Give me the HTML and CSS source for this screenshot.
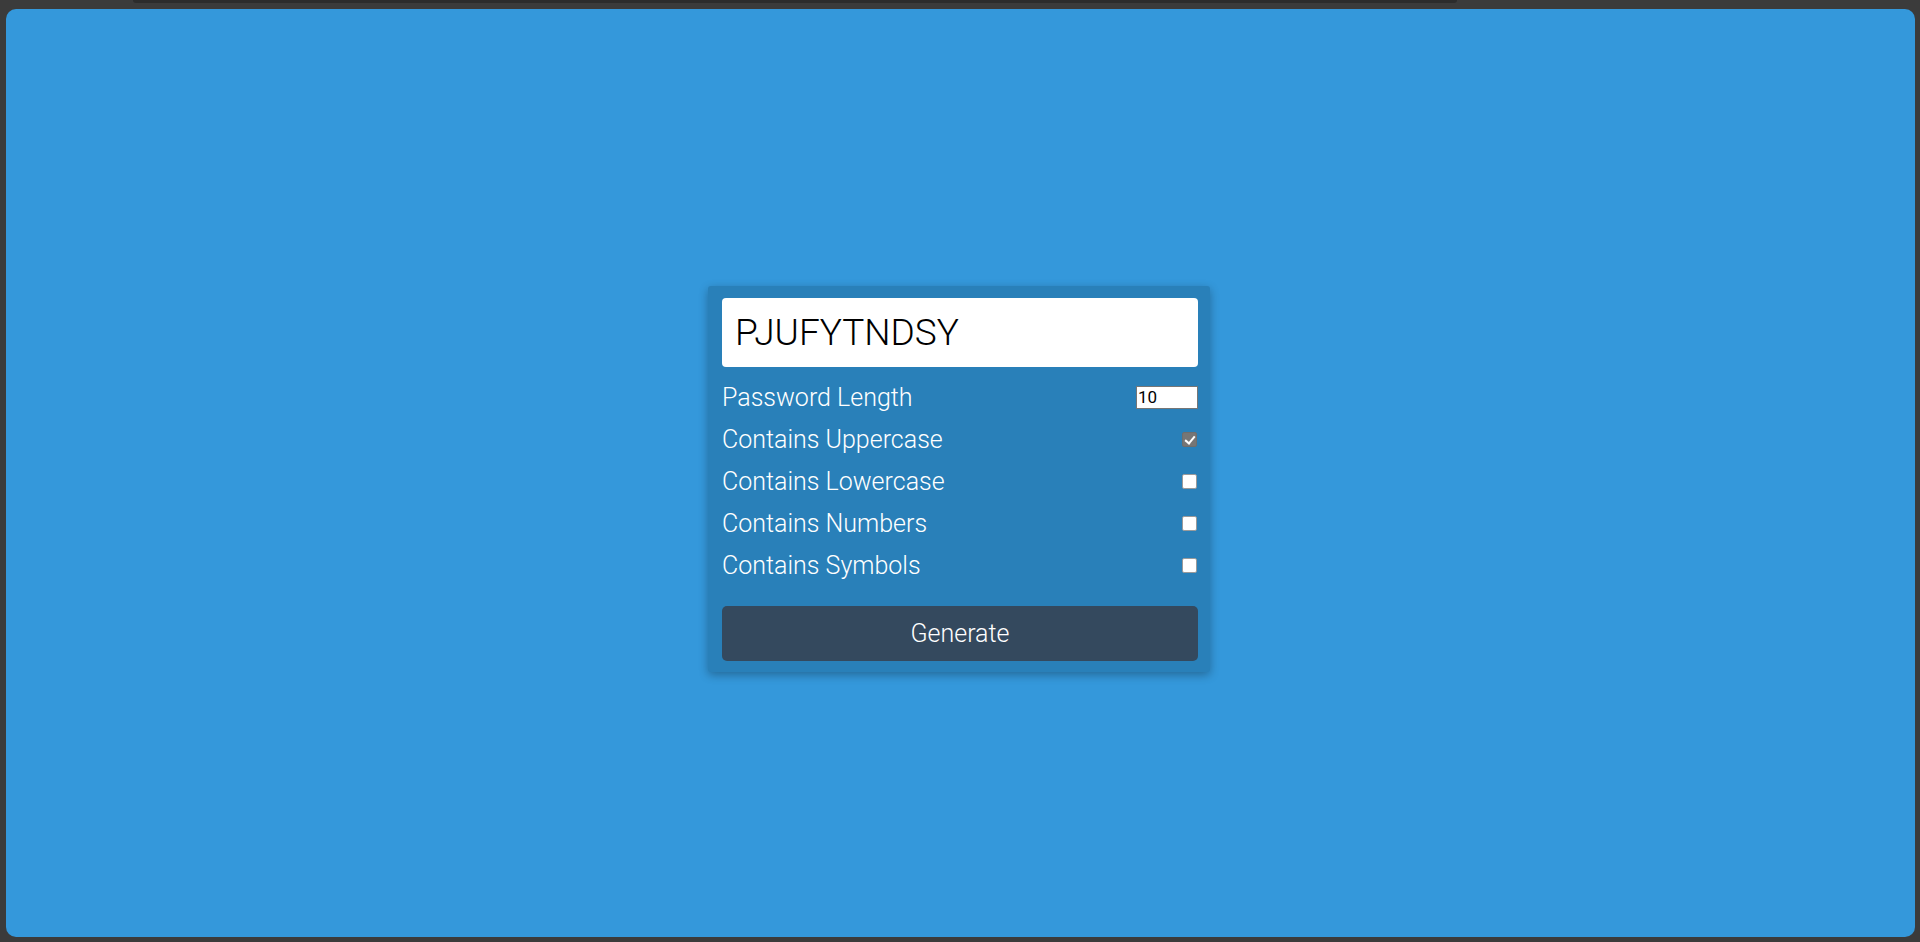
FILE: index.html
```html
<!DOCTYPE html>
<html lang="en">
<head>
<meta charset="utf-8">
<title>Password Generator</title>
<link rel="stylesheet" href="styles.css">
</head>
<body>
<div class="topbar"></div>
<main class="panel">
  <div class="card">
    <div class="result">PJUFYTNDSY</div>
    <div class="row">
      <label for="len">Password Length</label>
      <input id="len" class="num" type="number" value="10" min="4" max="20">
    </div>
    <div class="row">
      <label for="up">Contains Uppercase</label>
      <input id="up" class="chk" type="checkbox" checked disabled>
    </div>
    <div class="row">
      <label for="lo">Contains Lowercase</label>
      <input id="lo" class="chk" type="checkbox">
    </div>
    <div class="row">
      <label for="nu">Contains Numbers</label>
      <input id="nu" class="chk" type="checkbox">
    </div>
    <div class="row">
      <label for="sy">Contains Symbols</label>
      <input id="sy" class="chk" type="checkbox">
    </div>
    <button class="btn" type="button">Generate</button>
  </div>
</main>
</body>
</html>
```
FILE: styles.css
```css
* { box-sizing: border-box; }
html, body { height: 100%; }
body {
  margin: 0;
  background: #3b3b3b;
  font-family: Roboto, "Liberation Sans", sans-serif;
  padding: 9px 5px 5px 6px;
  position: relative;
}
.topbar {
  position: absolute;
  top: 0;
  left: 133px;
  width: 1324px;
  height: 3px;
  background: #2c2c2c;
  border-radius: 0 0 6px 6px;
}
.panel {
  height: 928px;
  background: #3498db;
  border-radius: 10px;
  display: flex;
  align-items: center;
  justify-content: center;
  padding-top: 12px;
  padding-right: 3px;
}
.card {
  width: 502px;
  background: #2980b9;
  border-radius: 3px;
  padding: 12px 12px 11px 14px;
  box-shadow: 0 3px 10px rgba(0, 0, 0, 0.3);
  display: flex;
  flex-direction: column;
}
.result {
  height: 69px;
  background: #fff;
  border-radius: 4px;
  color: #000;
  font-weight: 300;
  font-size: 37px;
  display: flex;
  align-items: center;
  padding: 0 14px 0 13px;
  margin-bottom: 9px;
}
.row {
  height: 42px;
  display: flex;
  align-items: center;
  justify-content: space-between;
  color: #fff;
  font-size: 25px;
  font-weight: 300;
}
.num {
  width: 62px;
  height: 23px;
  margin: 0;
  border: 1px solid #767676;
  padding: 0 1px;
  font-family: Roboto, "Liberation Sans", sans-serif;
  font-size: 17px;
  color: #000;
  background: #fff;
}
.chk {
  -webkit-appearance: none;
  appearance: none;
  width: 15px;
  height: 15px;
  margin: 0 1px 0 0;
  border: 1px solid #9a9a9a;
  border-radius: 2px;
  background: #fff;
  position: relative;
}
.chk:checked {
  background: #767676;
  border-color: #6e6e6e;
}
.chk:checked::after {
  content: "";
  position: absolute;
  left: 4px;
  top: 1px;
  width: 4px;
  height: 8px;
  border: solid #fff;
  border-width: 0 2px 2px 0;
  transform: rotate(40deg);
}
.btn {
  margin-top: 20px;
  height: 55px;
  border: none;
  border-radius: 5px;
  background: #34495e;
  color: #fff;
  font-family: Roboto, "Liberation Sans", sans-serif;
  font-weight: 300;
  font-size: 25px;
  cursor: pointer;
}
```
